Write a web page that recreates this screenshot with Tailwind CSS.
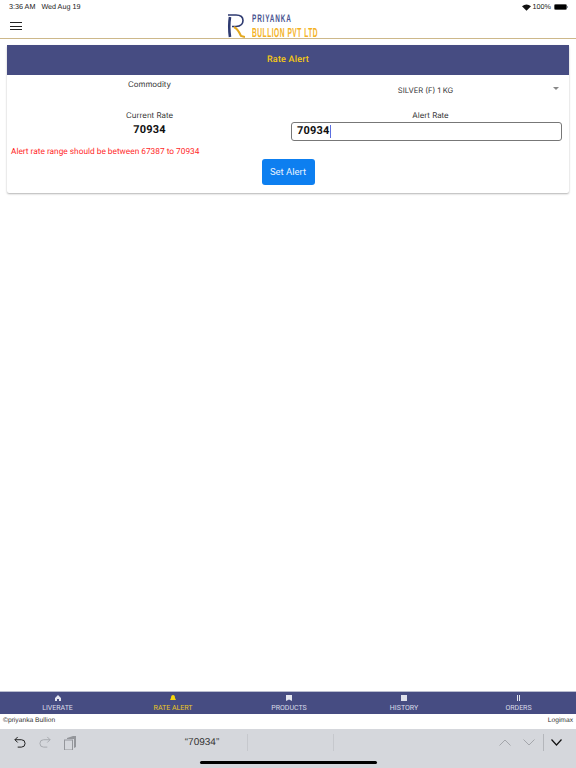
<!DOCTYPE html>
<html lang="en">
<head>
<meta charset="UTF-8">
<title>Rate Alert</title>
<script src="https://cdn.jsdelivr.net/npm/@tailwindcss/browser@4"></script>
</head>
<body class="bg-white font-['Roboto',sans-serif] text-[#212529] [text-rendering:geometricPrecision]">
<div class="flex h-[768px] w-[576px] flex-col overflow-hidden">

  <!-- status bar -->
  <div class="flex h-[14px] items-center justify-between pl-[9px] pr-[8px] pt-[1px] font-['Liberation_Sans',sans-serif] text-[7.2px] text-[#222]">
    <div class="flex gap-[6px]"><span>3:36 AM</span><span>Wed Aug 19</span></div>
    <div class="flex items-center gap-[2px]">
      <svg class="h-[7px] w-[9px]" viewBox="0 0 18 13" fill="#111"><path d="M9 13 L0 4 Q9 -3 18 4 Z"/></svg>
      <span>100%</span>
      <div class="ml-[1px] flex items-center"><div class="h-[6px] w-[13px] rounded-[1.5px] border border-[#555] bg-black"></div><div class="h-[2px] w-[1px] bg-gray-400"></div></div>
    </div>
  </div>

  <!-- header -->
  <div class="relative box-content flex h-[24px] items-center border-b border-[#cdb88a]">
    <div class="ml-[10px] flex w-[12px] flex-col gap-[2.5px]">
      <div class="h-[1px] bg-[#222]"></div><div class="h-[1px] bg-[#222]"></div><div class="h-[1px] bg-[#222]"></div>
    </div>
    <div class="absolute left-[227px] top-0 flex h-[24px] items-start gap-[7px]">
      <svg class="h-[24px] w-[18px]" viewBox="0 0 18 24" fill="none">
        <path d="M1 1 H9 Q16 1 16 6.5 Q16 12 9 12.5 H5" stroke="#2e3a70" stroke-width="1.6"/>
        <path d="M3 3 Q1.5 12 3 23" stroke="#2e3a70" stroke-width="2.6"/>
        <path d="M7 13 Q11 15 14 22 L18 23" stroke="#e3a81e" stroke-width="2"/>
      </svg>
      <div class="flex flex-col font-['Liberation_Sans',sans-serif] leading-none">
        <span class="origin-left scale-x-[0.58] whitespace-nowrap text-[11px] font-bold tracking-[1.5px] text-[#4a5490]">PRIYANKA</span>
        <span class="mt-[1px] origin-left scale-x-[0.51] whitespace-nowrap text-[13px] font-bold tracking-[1px] text-[#f4b223]">BULLION PVT LTD</span>
      </div>
    </div>
  </div>

  <!-- main -->
  <main class="flex-1 px-[7px] pt-[6px]">
    <div class="rounded-[2px] bg-white shadow-[0_1px_2px_rgba(0,0,0,0.3)]">
      <div class="flex h-[30px] items-center justify-center bg-[#464c82] pt-[2px] text-[9px] font-medium tracking-[0.2px] text-[#f6c913]">Rate Alert</div>
      <div class="flex h-[118px] flex-col">
        <div class="flex">
          <div class="w-[285px] pt-[4px] text-center font-['Inter',sans-serif] text-[7.9px] leading-[11px] text-[#333]">Commodity</div>
          <div class="relative flex-1 pr-[10px] pt-[10px] text-center font-['Inter',sans-serif] text-[7.6px] leading-[11px] text-[#333]">
            SILVER (F) 1 KG
            <div class="absolute right-[10px] top-[12px] h-0 w-0 border-x-[3px] border-t-[3px] border-x-transparent border-t-[#888]"></div>
          </div>
        </div>
        <div class="mt-[14px] flex">
          <div class="w-[285px] text-center">
            <div class="font-['Inter',sans-serif] text-[7.9px] leading-[11px] text-[#333]">Current Rate</div>
            <div class="mt-[2px] text-[11px] font-bold leading-[14px] tracking-[0.2px] text-[#111]">70934</div>
          </div>
          <div class="flex-1">
            <div class="text-center font-['Inter',sans-serif] text-[7.9px] leading-[11px] text-[#333]">Alert Rate</div>
            <div class="ml-[-1px] mr-[7px] mt-[1px] flex h-[19px] items-center rounded-[3px] border border-[#777] pl-[5px] text-[11px] font-bold tracking-[0.2px] text-[#111]">70934<span class="h-[13px] w-[1.5px] bg-[#5b6ee0]"></span></div>
          </div>
        </div>
        <div class="mt-[6px] pl-[4px] text-[8.3px] leading-[11px] text-[#ff2a2a]">Alert rate range should be between 67387 to 70934</div>
        <div class="mt-[1px] flex justify-center">
          <button class="flex h-[26px] w-[53px] items-center justify-center rounded-[3px] bg-[#0d7ff0] text-[9.5px] text-[#e8f2ff]">Set Alert</button>
        </div>
      </div>
    </div>
  </main>

  <!-- bottom tabs -->
  <nav class="grid h-[23px] grid-cols-[115px_116px_116px_114px_115px] border-t border-[#b9bdd0] bg-[#464c82] text-[7px] leading-[8px] text-[#d9dbe8]">
    <div class="flex flex-col items-center pt-[3px]">
      <svg class="mb-[3px] h-[6px] w-[6px]" viewBox="0 0 6 6" fill="#e4e6f0"><path d="M3 0 L6 3 V6 H4 V4 H2 V6 H0 V3 Z"/></svg>
      LIVERATE
    </div>
    <div class="flex flex-col items-center pt-[3px] text-[#e9c71c]">
      <svg class="mb-[3px] h-[6px] w-[6px]" viewBox="0 0 6 6" fill="#f6d60e"><path d="M3 0 Q5 0 5 3 L6 5 H0 L1 3 Q1 0 3 0 Z"/></svg>
      RATE ALERT
    </div>
    <div class="flex flex-col items-center pt-[3px]">
      <svg class="mb-[3px] h-[6px] w-[6px]" viewBox="0 0 6 6" fill="#e4e6f0"><path d="M0 0 H6 V6 L3 4.5 L0 6 Z"/></svg>
      PRODUCTS
    </div>
    <div class="flex flex-col items-center pt-[3px]">
      <div class="mb-[3px] h-[6px] w-[6px] bg-[#dfe1ec]"></div>
      HISTORY
    </div>
    <div class="flex flex-col items-center pt-[3px]">
      <div class="mb-[3px] flex h-[6px] gap-[1px]"><div class="w-[1px] bg-[#e4e6f0]"></div><div class="w-[1px] bg-[#e4e6f0]"></div></div>
      ORDERS
    </div>
  </nav>

  <!-- copyright -->
  <div class="flex h-[15px] items-center justify-between px-[3px] font-['Liberation_Sans',sans-serif] text-[6.7px] text-[#333]">
    <span>©priyanka Bullion</span><span>Logimax</span>
  </div>

  <!-- keyboard bar -->
  <div class="relative h-[39px] bg-[#d5d7dc]">
    <div class="flex h-[27px] items-center pl-[14px]">
      <svg class="h-[13px] w-[12px]" viewBox="0 0 13 14" fill="none" stroke="#111" stroke-width="1"><path d="M4 1 L1 4 L4 7 M1 4 H8 Q12 4 12 8 Q12 12 8 12 H4"/></svg>
      <svg class="ml-[13px] h-[13px] w-[12px]" viewBox="0 0 13 14" fill="none" stroke="#a4a6ab" stroke-width="1"><path d="M9 1 L12 4 L9 7 M12 4 H5 Q1 4 1 8 Q1 12 5 12 H9"/></svg>
      <svg class="ml-[13px] h-[14px] w-[12px]" viewBox="0 0 12 14" fill="#94969b"><path d="M3 2 L9 0 H12 V11 L10 12 V3 H3 Z"/><rect x="0.5" y="4" width="8" height="10" fill="none" stroke="#94969b"/></svg>
      <span class="ml-[102px] w-[48px] text-center font-['Liberation_Sans',sans-serif] text-[10px] text-[#333]">“70934”</span>
      <div class="ml-[21px] h-[17px] w-[1px] bg-[#c6c8cd]"></div>
      <div class="ml-[85px] h-[17px] w-[1px] bg-[#c6c8cd]"></div>
      <svg class="ml-[165px] h-[7px] w-[12px]" viewBox="0 0 12 7" fill="none" stroke="#a4a6ab"><path d="M0.5 6.5 L6 1 L11.5 6.5"/></svg>
      <svg class="ml-[12px] h-[7px] w-[12px]" viewBox="0 0 12 7" fill="none" stroke="#a4a6ab"><path d="M0.5 0.5 L6 6 L11.5 0.5"/></svg>
      <div class="ml-[8px] h-[17px] w-[1px] bg-[#b4b6bb]"></div>
      <svg class="ml-[7px] h-[7px] w-[11px]" viewBox="0 0 11 7" fill="none" stroke="#111" stroke-width="1.2"><path d="M0.5 0.5 L5.5 6 L10.5 0.5"/></svg>
    </div>
    <div class="absolute bottom-[4px] left-[200px] h-[3px] w-[177px] rounded-full bg-black"></div>
  </div>
</div>
</body>
</html>
